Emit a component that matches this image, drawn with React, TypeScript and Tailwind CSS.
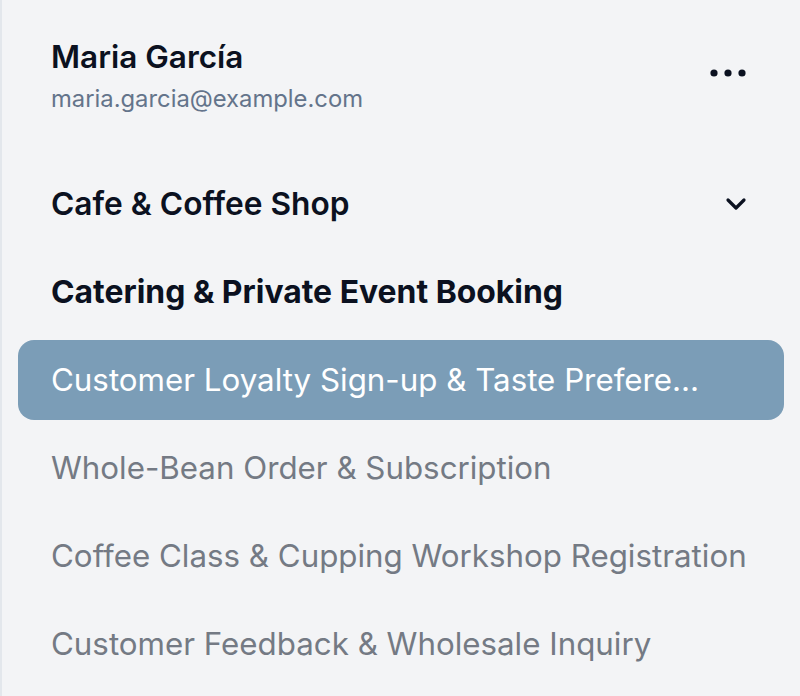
import { ChevronDown } from "lucide-react";

type NavItem = {
  label: string;
  kind: "group" | "heading" | "link";
  active?: boolean;
};

const items: NavItem[] = [
  { label: "Cafe & Coffee Shop", kind: "group" },
  { label: "Catering & Private Event Booking", kind: "heading" },
  { label: "Customer Loyalty Sign-up & Taste Preferences", kind: "link", active: true },
  { label: "Whole-Bean Order & Subscription", kind: "link" },
  { label: "Coffee Class & Cupping Workshop Registration", kind: "link" },
  { label: "Customer Feedback & Wholesale Inquiry", kind: "link" },
];

const clip = (s: string, n: number) => (s.length > n ? s.slice(0, n) + "..." : s);

function Dots() {
  return (
    <svg width="36" height="8" viewBox="0 0 36 8" className="text-[#0b1120]">
      <circle cx="4" cy="4" r="3.6" fill="currentColor" />
      <circle cx="18" cy="4" r="3.6" fill="currentColor" />
      <circle cx="32" cy="4" r="3.6" fill="currentColor" />
    </svg>
  );
}

export default function App() {
  return (
    <aside
      className="h-[696px] w-full overflow-hidden border-l-2 border-[#e3e7ec] bg-[#f3f4f6]"
      style={{ fontFamily: "Inter, 'Noto Sans', sans-serif" }}
    >
      <div className="flex items-center justify-between pl-[49px] pr-[54px] pt-[37px]">
        <div className="flex flex-col">
          <span className="text-[31.5px] font-semibold leading-[40px] text-[#0b1120]">
            Maria García
          </span>
          <span className="mt-[6px] text-[23.8px] leading-[32px] text-[#64748b]">
            maria.garcia@example.com
          </span>
        </div>
        <button className="mt-[-6px]">
          <Dots />
        </button>
      </div>

      <nav className="mt-[49px] flex flex-col gap-2 px-4">
        {items.map((item) => (
          <div
            key={item.label}
            className={
              item.active
                ? "flex h-[80px] items-center rounded-2xl bg-[#7b9db7] pl-[33px] pr-4"
                : item.kind === "group"
                  ? "flex h-[80px] items-center rounded-2xl pl-[33px] pr-[38px]"
                  : "flex h-[80px] items-center rounded-2xl pl-[33px] pr-4"
            }
          >
            <span
              className={
                item.kind === "link"
                  ? item.active
                    ? "min-w-0 flex-1 whitespace-nowrap text-[31.3px] leading-[40px] text-white"
                    : "min-w-0 flex-1 whitespace-nowrap text-[31.3px] leading-[40px] text-[#747a84]"
                  : item.kind === "heading"
                    ? "min-w-0 flex-1 truncate text-[31.9px] font-bold leading-[40px] text-[#0b1120]"
                    : "min-w-0 flex-1 truncate text-[31.7px] font-semibold leading-[40px] text-[#0b1120]"
              }
            >
              {item.active ? clip(item.label, 40) : item.label}
            </span>
            {item.kind === "group" && (
              <ChevronDown size={32} strokeWidth={2.4} className="-mr-[6px] text-[#0b1120]" />
            )}
          </div>
        ))}
      </nav>
    </aside>
  );
}
